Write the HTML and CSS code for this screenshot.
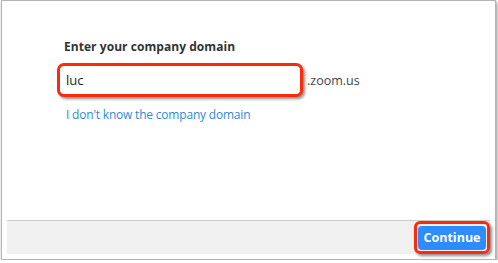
FILE: index.html
```html
<!DOCTYPE html>
<html lang="en">
<head>
    <meta charset="UTF-8">
    <title>Sign in with SSO</title>
    <link rel="stylesheet" href="styles.css">
</head>
<body>
    <!-- Ventana de dominio -->
    <div class="window">
        <div class="content">
            <h1 class="title">Enter your company domain</h1>
            <div class="domain-row">
                <div class="domain-input marked">luc</div>
                <span class="suffix">.zoom.us</span>
            </div>
            <a class="link" href="#">I don't know the company domain</a>
        </div>
        <div class="footer">
            <div class="button-mark marked">
                <button class="continue">Continue</button>
            </div>
        </div>
    </div>
</body>
</html>
```

FILE: styles.css
```css
/* Colores */
:root {
    --mark-red: #fa2a0a;
    --link-blue: #2f8ad6;
    --button-blue: #2d8cff;
    --footer-bg: #f0f0f0;
}

body {
    margin: 0;
    background: #ffffff;
    font-family: "Open Sans", "Noto Sans", sans-serif;
    color: #333333;
}

/* Ventana */
.window {
    width: 493px;
    height: 258px;
    margin-left: 1px;
    border: 1px solid #b4b4b4;
    box-shadow: 1px 2px 3px rgba(0, 0, 0, 0.45);
    background: #ffffff;
    display: flex;
    flex-direction: column;
}

.content {
    flex-grow: 1;
    padding: 38px 0 0 55px;
}

.title {
    margin: 0 0 0 7px;
    font-size: 12px;
    font-weight: bold;
    line-height: 16px;
    letter-spacing: 0.05px;
}

.domain-row {
    display: flex;
    align-items: center;
    margin-top: 8px;
}

/* Recuadros rojos de anotación */
.marked {
    border: 3px solid var(--mark-red);
    border-radius: 7px;
    box-shadow: 2px 2px 3px rgba(0, 0, 0, 0.45);
}

.domain-input {
    width: 234px;
    height: 28px;
    padding-left: 6px;
    font-size: 13px;
    line-height: 28px;
    color: #222222;
    background: #ffffff;
}

.suffix {
    margin-left: 4px;
    font-size: 12.5px;
    color: #444444;
}

.link {
    display: block;
    margin: 9px 0 0 9px;
    font-size: 12px;
    letter-spacing: -0.2px;
    color: var(--link-blue);
    text-decoration: none;
}

/* Pie */
.footer {
    margin: 0 5px 5px 5px;
    height: 33px;
    background: var(--footer-bg);
    border-top: 1px solid #cccccc;
    display: flex;
    justify-content: flex-end;
    align-items: center;
}

.button-mark {
    padding: 1px;
    border-radius: 6px;
}

.continue {
    width: 68px;
    height: 24px;
    border: none;
    border-radius: 4px;
    background: var(--button-blue);
    color: #ffffff;
    font-family: "Open Sans", "Noto Sans", sans-serif;
    font-size: 12.5px;
    font-weight: bold;
    padding: 0;
}
```
